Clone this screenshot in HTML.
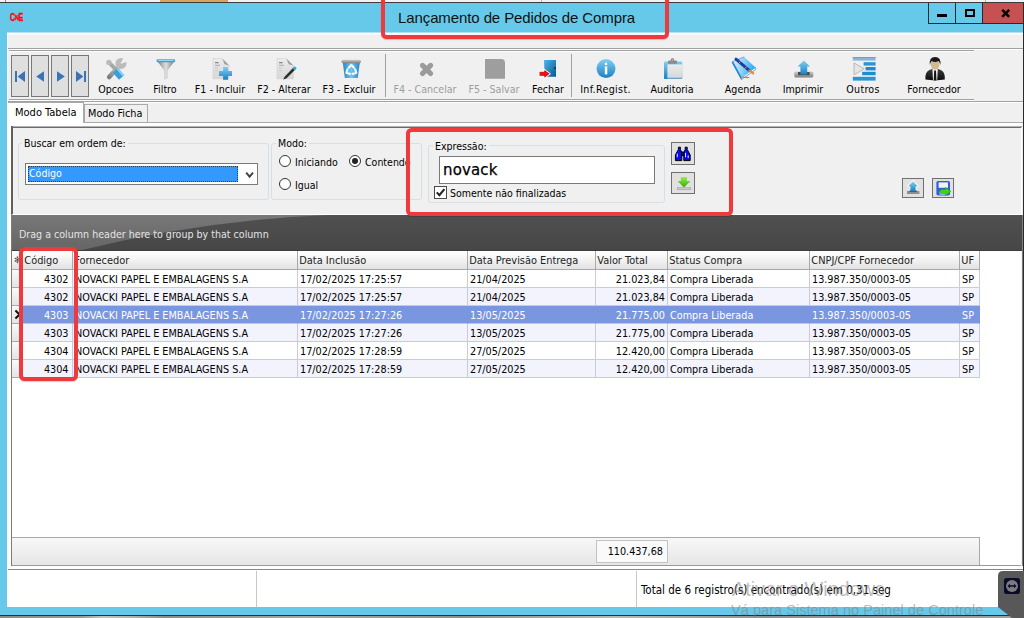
<!DOCTYPE html>
<html lang="pt-BR">
<head>
<meta charset="utf-8">
<title>Lançamento de Pedidos de Compra</title>
<style>
*{box-sizing:border-box;margin:0;padding:0}
html,body{width:1024px;height:618px;overflow:hidden;background:#66c9ea}
body{position:relative;font-family:"DejaVu Sans Condensed","Liberation Sans",sans-serif;font-size:10.5px;color:#000;line-height:13px}
.abs,.abs-c>*{position:absolute}
#topstrip{left:0;top:0;width:1024px;height:3px;background:#f2f2f2;border-bottom:1px solid #3c3c3c}
#title{left:398px;top:8px;font:15px "Liberation Sans",sans-serif;color:#111;white-space:nowrap;line-height:20px;letter-spacing:-0.1px}
#client{left:7px;top:32px;width:1016px;height:575px;background:#f0f0f0}
.cap{top:3px;height:21px;border:1px solid #1d2b33;border-top:none}
.tbl{position:absolute;top:82px;height:14px;line-height:14px;white-space:nowrap;text-align:center;transform:translateX(-50%);font-size:10.6px}
.dis{color:#9d9d9d}
.ico{position:absolute;top:57px;width:24px;height:24px;transform:translateX(-50%)}
.nav{position:absolute;top:55px;width:18px;height:42px;border:1px solid #787878;background:#dfdfdf}
.sep{position:absolute;top:54px;width:1px;height:43px;background:#a0a0a0}
.gb{position:absolute;border:1px solid #d5dfe5;border-radius:3px}
.gbl{position:absolute;background:#f0f0f0;white-space:nowrap;padding:0 2px}
.btn{position:absolute;border:1px solid #707070;background:#e1e1e1}
.radio{position:absolute;width:12px;height:12px;border:1px solid #333;border-radius:50%;background:#fff}
.hdr{position:absolute;top:0;height:19px;line-height:20px;font-size:10.9px;border-right:1px solid #a9a9a9;border-bottom:1px solid #a9a9a9;background:linear-gradient(#ffffff,#f4f4f4 45%,#e2e2e2);padding-left:1.3px;white-space:nowrap;overflow:hidden;color:#222}
.row{position:absolute;left:0;width:968px;height:18px}
.row span{position:absolute;top:0;height:18px;line-height:19px;font-size:10.75px;white-space:nowrap;overflow:hidden;border-right:1px solid #c4cbe3;border-bottom:1px solid #c4cbe3;padding:0 2px}
.row.a span{background:#fff}
.row.b span{background:#f2f3fc}
.row.s span{background:#7a96df;color:#fff;border-color:#7a96df;border-bottom-color:#b9c6ee}
.r{text-align:right}
.red{position:absolute;border:4px solid #ee3a3c;border-radius:5.5px;box-shadow:0 1px 1px rgba(0,0,0,.18)}
</style>
</head>
<body>
<div id="topstrip" class="abs"></div>
<div class="abs" style="left:160px;top:0;width:68px;height:2px;background:#d9a45f"></div>
<div class="abs" style="left:5px;top:0;width:1px;height:2px;background:#8a8a8a"></div>
<div class="abs" style="left:541px;top:0;width:1px;height:2px;background:#b5b5b5"></div>
<div class="abs" style="left:985px;top:0;width:1px;height:2px;background:#b5b5b5"></div>
<div id="client" class="abs"></div>
<div class="abs" style="left:7px;top:33px;width:1016px;height:1px;background:#fff"></div>
<div class="abs" style="left:7px;top:34px;width:1016px;height:1px;background:#f8f8f8"></div>
<!-- title bar -->
<div class="abs" style="left:10px;top:11.5px;font:bold 10px 'Liberation Sans',sans-serif;color:#fa0a0f;line-height:11px;letter-spacing:-0.4px;transform:scaleX(0.72);transform-origin:0 0;-webkit-text-stroke:0.5px #fa0a0f">C<span style="font-size:7.5px;position:relative;top:-1px">N</span>E</div>
<div id="title" class="abs">Lançamento de Pedidos de Compra</div>
<div class="abs cap" style="left:928px;width:28px"></div>
<div class="abs cap" style="left:955px;width:28px"></div>
<div class="abs cap" style="left:982px;width:42px;background:#c75050;border-right:none"></div>
<div class="abs" style="left:937px;top:14px;width:10px;height:3px;background:#000"></div>
<div class="abs" style="left:965px;top:9px;width:10px;height:8px;border:2px solid #000"></div>
<svg class="abs" style="left:1001px;top:9px" width="10" height="9" viewBox="0 0 10 9"><path d="M1.2 0.8 L8.2 7.8 M8.2 0.8 L1.2 7.8" stroke="#000" stroke-width="2.5"/></svg>
<div class="abs" style="left:1023px;top:3px;width:1px;height:570px;background:#2b2b2b"></div>

<!-- toolbar -->
<div class="abs" style="left:7px;top:48px;width:1016px;height:1px;background:#a0a0a0"></div>
<div class="abs" style="left:7px;top:49px;width:1016px;height:1px;background:#fff"></div>
<div class="abs" style="left:9px;top:50px;width:965px;height:1px;background:#a0a0a0"></div>
<div class="abs" style="left:9px;top:51px;width:965px;height:1px;background:#fff"></div>
<div class="abs" style="left:9px;top:99px;width:965px;height:1px;background:#a0a0a0"></div>
<div class="abs" style="left:9px;top:100px;width:965px;height:1px;background:#fff"></div>
<div class="abs" style="left:7px;top:101px;width:1016px;height:1px;background:#a0a0a0"></div>
<div class="abs" style="left:7px;top:102px;width:1016px;height:1px;background:#fff"></div>

<div class="nav" style="left:11px"></div>
<div class="nav" style="left:31px"></div>
<div class="nav" style="left:51px"></div>
<div class="nav" style="left:71px"></div>
<svg class="abs" style="left:10.5px;top:56px" width="80" height="42" viewBox="0 0 80 42">
 <g fill="#3874b6">
  <rect x="4" y="15" width="2" height="11"/><path d="M14 15 L14 26 L6.6 20.5 Z"/>
  <path d="M33 15.2 L33 25.8 L25.2 20.5 Z"/>
  <path d="M46 15.2 L46 25.8 L53.8 20.5 Z"/>
  <path d="M65 15 L65 26 L72.4 20.5 Z"/><rect x="73" y="15" width="2" height="11"/>
 </g>
</svg>

<div class="tbl" style="left:116px">Opcoes</div>
<div class="tbl" style="left:165px">Filtro</div>
<div class="tbl" style="left:220px">F1 - Incluir</div>
<div class="tbl" style="left:284px">F2 - Alterar</div>
<div class="tbl" style="left:349px">F3 - Excluir</div>
<div class="sep" style="left:385px"></div>
<div class="tbl dis" style="left:425px">F4 - Cancelar</div>
<div class="tbl dis" style="left:494px">F5 - Salvar</div>
<div class="tbl" style="left:548px">Fechar</div>
<div class="sep" style="left:571px"></div>
<div class="tbl" style="left:605.5px;letter-spacing:0.35px">Inf.Regist.</div>
<div class="tbl" style="left:672px">Auditoria</div>
<div class="tbl" style="left:743px">Agenda</div>
<div class="tbl" style="left:803px">Imprimir</div>
<div class="tbl" style="left:863px;letter-spacing:0.25px">Outros</div>
<div class="tbl" style="left:934px">Fornecedor</div>

<!-- ICONS -->
<svg class="abs" style="left:0;top:52px" width="1024" height="48" viewBox="0 52 1024 48">
<defs>
 <linearGradient id="gBlueV" x1="0" y1="0" x2="0" y2="1"><stop offset="0" stop-color="#7fd0f3"/><stop offset="1" stop-color="#1a80c2"/></linearGradient>
 <linearGradient id="gBlueD" x1="0" y1="0" x2="1" y2="1"><stop offset="0" stop-color="#48b8f0"/><stop offset="1" stop-color="#0a5688"/></linearGradient>
 <linearGradient id="gBlueH" x1="0" y1="0" x2="1" y2="0"><stop offset="0" stop-color="#2587c9"/><stop offset="0.5" stop-color="#72c8f0"/><stop offset="1" stop-color="#2587c9"/></linearGradient>
 <linearGradient id="gGrayH" x1="0" y1="0" x2="1" y2="0"><stop offset="0" stop-color="#808080"/><stop offset="0.5" stop-color="#dedede"/><stop offset="1" stop-color="#808080"/></linearGradient>
 <linearGradient id="gGrayV" x1="0" y1="0" x2="0" y2="1"><stop offset="0" stop-color="#cfcfcf"/><stop offset="1" stop-color="#7d7d7d"/></linearGradient>
 <linearGradient id="gDoc" x1="0" y1="0" x2="0" y2="1"><stop offset="0" stop-color="#ececec"/><stop offset="1" stop-color="#d6d6d6"/></linearGradient>
 <linearGradient id="gWr" x1="0" y1="1" x2="1" y2="0"><stop offset="0" stop-color="#7c7c7c"/><stop offset="0.6" stop-color="#b4b4b4"/><stop offset="1" stop-color="#d8d8d8"/></linearGradient>
</defs>

<!-- Opcoes: wrench + screwdriver -->
<g>
 <path d="M109.2 77 L119 66.4" stroke="url(#gWr)" stroke-width="4.6" stroke-linecap="round" fill="none"/>
 <circle cx="121" cy="63.4" r="5.5" fill="#bcbcbc"/>
 <path d="M120.4 64 L124.2 56.6 L128.6 61 Z" fill="#f0f0f0"/>
 <path d="M109.6 63.2 L115.5 69.2" stroke="#a6a6a6" stroke-width="3.8" stroke-linecap="round" fill="none"/>
 <circle cx="108.9" cy="62.4" r="2.7" fill="#bababa"/>
 <path d="M115.4 70.2 L121.6 77.6" stroke="#3a9fd9" stroke-width="7" fill="none"/>
 <path d="M117.4 68.6 L123.6 76" stroke="#86d2f3" stroke-width="2" fill="none"/>
</g>

<!-- Filtro: funnel -->
<g transform="translate(0,0.4)">
 <path d="M157.6 61.2 L174.2 61.2 L167.6 70 L167.6 78.2 L164.2 79 L164.2 70 Z" fill="url(#gGrayH)"/>
 <rect x="156.6" y="58.8" width="18.6" height="3" rx="1.2" fill="#3c9fd8"/>
 <rect x="158" y="59.4" width="15.8" height="1.2" rx="0.6" fill="#8fd6f5"/>
</g>

<!-- F1 Incluir: doc + plus -->
<g>
 <path d="M213 58.6 L222.5 58.6 L229 65 L229 78.8 L213 78.8 Z" fill="url(#gDoc)" stroke="#d2d2d2" stroke-width="0.6"/>
 <path d="M222.4 58.8 L229 65.4 L224.6 64.2 Z" fill="#9c9c9c"/>
 <rect x="215" y="62" width="3.6" height="1.3" fill="#8a8a8a"/>
 <rect x="215" y="64.8" width="5" height="1" fill="#a8a8a8"/>
 <rect x="215" y="67.6" width="3" height="0.8" fill="#c4c4c4"/>
 <rect x="215" y="70.4" width="3" height="0.8" fill="#c8c8c8"/>
 <path d="M223.1 67 H228 V71 H232 V75.9 H228 V79.8 H223.1 V75.9 H219 V71 H223.1 Z" fill="url(#gBlueV)"/>
</g>

<!-- F2 Alterar: doc + pen -->
<g>
 <path d="M277 58.6 L286.6 58.6 L293.4 65 L293.4 78.8 L277 78.8 Z" fill="url(#gDoc)" stroke="#d2d2d2" stroke-width="0.6"/>
 <path d="M286.4 58.8 L293.2 65.4 L288.8 64.2 Z" fill="#9c9c9c"/>
 <rect x="279" y="62" width="3.6" height="1.3" fill="#8a8a8a"/>
 <rect x="279" y="64.8" width="5" height="1" fill="#a8a8a8"/>
 <rect x="279" y="67.6" width="3" height="0.8" fill="#c4c4c4"/>
 <rect x="279" y="70.4" width="3" height="0.8" fill="#c8c8c8"/>
 <path d="M283.2 79.6 L284.6 76.8 L293.4 67.6 L295.4 69.4 L286.4 78.6 Z" fill="#2e2e2e"/>
 <circle cx="294.7" cy="68.2" r="1.7" fill="#35a6e2"/>
</g>

<!-- F3 Excluir: recycle bin -->
<g>
 <path d="M342.8 62.6 L359.8 62.6 L357.8 78 L344.8 78 Z" fill="url(#gBlueH)"/>
 <rect x="341.4" y="59.7" width="19.6" height="3.5" rx="1.6" fill="url(#gGrayV)"/>
 <g fill="none" stroke="#fff" stroke-width="2.2" stroke-linecap="round" stroke-linejoin="round" opacity="0.95">
  <path d="M348.9 67.6 L351.3 65 L353.8 67.6"/>
  <path d="M355.2 69.4 L356.2 72.8 L352.8 73.9"/>
  <path d="M349.8 73.9 L346.5 72.8 L347.4 69.4"/>
 </g>
</g>

<!-- F4 Cancelar -->
<g stroke="#9b9b9b" stroke-width="5.2" stroke-linecap="round">
 <path d="M422.5 65.4 L430.6 73.5"/><path d="M430.6 65.4 L422.5 73.5"/>
</g>

<!-- F5 Salvar -->
<path d="M485 59 H501.5 Q504.9 59.2 505 63 V78.8 H485 Z" fill="#9e9e9e"/>

<!-- Fechar: door + arrow -->
<g>
 <path d="M544 60 H556 V76.8 H544.6 Z" fill="url(#gBlueD)"/>
 <rect x="554.3" y="67.2" width="1.5" height="1.8" fill="#0a2a44"/>
 <path d="M539 71.2 H544 V69 L550.4 73.8 L544 78.6 V76.4 H539 Z" fill="#e3131b" stroke="#fff" stroke-width="1" stroke-linejoin="round"/>
</g>

<!-- Inf.Regist -->
<g>
 <circle cx="606" cy="68.6" r="9.5" fill="url(#gBlueV)"/>
 <circle cx="606" cy="63.9" r="1.35" fill="#fff"/>
 <rect x="604.8" y="66.4" width="2.5" height="8" fill="#fff"/>
</g>

<!-- Auditoria: clipboard -->
<g>
 <rect x="664" y="61.4" width="18.2" height="17.7" rx="1.2" fill="url(#gBlueV)"/>
 <rect x="667.4" y="64.4" width="14.8" height="13.8" fill="url(#gDoc)"/>
 <rect x="667.4" y="77.4" width="14.8" height="1" fill="#b9b9b9"/>
 <rect x="668" y="60.4" width="9" height="3.4" rx="0.8" fill="#8b8b8b"/>
 <circle cx="672.5" cy="59.8" r="1.7" fill="#8b8b8b"/>
 <circle cx="672.5" cy="59.8" r="0.6" fill="#e4e4e4"/>
</g>

<!-- Agenda: book + pen -->
<g>
 <defs><linearGradient id="gBook" x1="0" y1="0.4" x2="1" y2="0.6"><stop offset="0" stop-color="#d2eefc"/><stop offset="0.45" stop-color="#8fd2f6"/><stop offset="1" stop-color="#1ea6ee"/></linearGradient></defs>
 <path d="M741.2 79.8 L755.8 69.4 L755.4 67.4 L741 77.8 Z" fill="#fff" stroke="#2b80d2" stroke-width="0.7"/>
 <path d="M732 61.8 L744.2 56.9 L755.4 67.5 L741.4 78 Z" fill="url(#gBook)"/>
 <path d="M732.4 62 L741.3 78.4" stroke="#2383da" stroke-width="1.7"/>
 <path d="M732 61.8 L744.2 56.9" stroke="#3a9be6" stroke-width="0.8"/>
 <path d="M736 59.2 L749.2 70.4" stroke="#1c3fa6" stroke-width="3" stroke-linecap="round"/>
 <path d="M740.4 61.4 L738.8 63.4 M746.4 66.6 L744.8 68.6" stroke="#d9a040" stroke-width="1"/>
 <path d="M749.4 70.6 L753.2 73.4" stroke="#e58a3c" stroke-width="2.2" stroke-linecap="round"/>
 <path d="M742.4 77.2 L748.6 77.6" stroke="#e27a30" stroke-width="1.3" stroke-linecap="round"/>
</g>

<!-- Imprimir: tray + up arrow -->
<g>
 <rect x="794.3" y="71.4" width="19" height="6.2" rx="1.6" fill="url(#gGrayV)"/>
 <rect x="798" y="72" width="11.6" height="3.2" fill="#4a4a4a"/>
 <path d="M803.8 60.6 L810 66.6 H807.2 V74.6 H800.4 V66.6 H797.6 Z" fill="url(#gBlueV)"/>
</g>

<!-- Outros -->
<g>
 <rect x="852.8" y="57" width="22.8" height="3.6" fill="#8db4d8"/>
 <rect x="852.8" y="57" width="22.8" height="0.8" fill="#6b96c0"/>
 <rect x="863.6" y="62.2" width="12" height="3.4" fill="#2a95d4"/>
 <rect x="865.6" y="67" width="10" height="3.4" fill="#1b8dd0"/>
 <rect x="862.2" y="71.8" width="13.4" height="3.4" fill="#1b8dd0"/>
 <rect x="852.8" y="76.8" width="22.8" height="3.8" fill="#2a95d4"/>
 <path d="M854 63 L864.4 68.8 L854 74.8 Z" fill="#e4e6e4" stroke="#a9aca9" stroke-width="0.8"/>
</g>

<!-- Fornecedor: person -->
<g>
 <defs><linearGradient id="gSuit" x1="0" y1="0" x2="0" y2="1"><stop offset="0" stop-color="#3c3c3c"/><stop offset="1" stop-color="#0b0b0b"/></linearGradient></defs>
 <path d="M925.4 79.6 Q925 71.2 930 69.8 L933 68.8 H937.2 L940.2 69.8 Q945.2 71.2 944.8 79.6 Q935 81.2 925.4 79.6 Z" fill="url(#gSuit)"/>
 <path d="M932.4 69 H937.8 L937.2 80.5 H933 Z" fill="#f3f3f3"/>
 <path d="M934.2 70.6 H936 L936.5 80.5 H933.7 Z" fill="#141414"/>
 <ellipse cx="935.1" cy="64.6" rx="4.3" ry="5" fill="#d3ba92"/>
 <path d="M929.9 65 Q928.8 57 935.1 56.9 Q941.4 57 940.3 65 Q939.8 61.8 938.4 61 Q935.1 62.8 931.8 61 Q930.4 61.8 929.9 65 Z" fill="#191919"/>
</g>
</svg>

<!-- tabs -->
<div class="abs" style="left:84px;top:104px;width:64px;height:19px;border:1px solid #a9a9a9;background:#f0f0f0;line-height:18px;padding-left:3px;white-space:nowrap;font-size:10.8px">Modo Ficha</div>
<div class="abs" style="left:7px;top:102px;width:77px;height:22px;border:1px solid #a9a9a9;border-bottom:none;background:#fff;line-height:19px;padding-left:7px;white-space:nowrap;font-size:11px">Modo Tabela</div>
<div class="abs" style="left:84px;top:122px;width:939px;height:1px;background:#a9a9a9"></div>
<div class="abs" style="left:8px;top:123px;width:1014px;height:3px;background:#fff"></div>

<div class="abs" style="left:8px;top:123px;width:3px;height:446px;background:#fff"></div>
<!-- search panel -->
<div class="abs" style="left:11px;top:126px;width:1011px;height:89px;background:#f0f0f0;border-top:2px solid #6b6b6b;border-left:2px solid #5f5f5f;border-right:1px solid #fff;border-bottom:1px solid #fff"></div>
<div class="abs" style="left:13px;top:126px;width:1008px;height:1px;background:#b2b2b2"></div>

<div class="gb" style="left:18px;top:143px;width:251px;height:57px"></div>
<div class="gbl" style="left:22px;top:137px">Buscar em ordem de:</div>
<div class="abs" style="left:25px;top:163px;width:233px;height:22px;border:1px solid #7a7a7a;background:#fff"></div>
<div class="abs" style="left:28px;top:166px;width:210px;height:16px;background:#3399ff;outline:1px dotted #4a3a1a;outline-offset:-1px;color:#fff;line-height:15px;padding-left:1px">Código</div>
<svg class="abs" style="left:245px;top:171px" width="10" height="8" viewBox="0 0 10 8"><path d="M1.2 1.6 L4.6 5.6 L8 1.6" fill="none" stroke="#444" stroke-width="2"/></svg>

<div class="gb" style="left:271px;top:143px;width:151px;height:57px"></div>
<div class="gbl" style="left:276px;top:137px">Modo:</div>
<div class="radio" style="left:279px;top:155px"></div>
<div class="abs" style="left:295px;top:156px;white-space:nowrap">Iniciando</div>
<div class="radio" style="left:349px;top:155px"></div>
<div class="abs" style="left:352px;top:158px;width:6px;height:6px;border-radius:50%;background:#222"></div>
<div class="abs" style="left:365px;top:156px;white-space:nowrap">Contendo</div>
<div class="radio" style="left:279px;top:178px"></div>
<div class="abs" style="left:295px;top:179px;white-space:nowrap">Igual</div>

<div class="gb" style="left:428px;top:145px;width:237px;height:58px"></div>
<div class="gbl" style="left:433px;top:140px">Expressão:</div>
<div class="abs" style="left:439px;top:156px;width:216px;height:28px;border:1px solid #7a7a7a;background:#fff;font:16.6px 'DejaVu Sans Condensed','Liberation Sans',sans-serif;line-height:25px;padding-left:3px;letter-spacing:0.2px;-webkit-text-stroke:0.25px #000">novack</div>
<div class="abs" style="left:434px;top:186px;width:13px;height:13px;border:1px solid #4a4a4a;background:#fff"></div>
<svg class="abs" style="left:435px;top:187px" width="11" height="11" viewBox="0 0 11 11"><path d="M1.8 5.4 L4.4 8.2 L9.4 2.2" fill="none" stroke="#222" stroke-width="2.1"/></svg>
<div class="abs" style="left:450px;top:187px;white-space:nowrap">Somente não finalizadas</div>

<div class="btn" style="left:671px;top:142px;width:24px;height:23px"></div>
<div class="btn" style="left:671px;top:172px;width:24px;height:22px"></div>
<div class="btn" style="left:902px;top:178px;width:22px;height:20px"></div>
<div class="btn" style="left:932px;top:178px;width:22px;height:20px"></div>

<!-- panel button icons -->
<svg class="abs" style="left:660px;top:136px" width="50" height="64" viewBox="660 136 50 64">
 <defs><linearGradient id="gGreen" x1="0" y1="0" x2="0" y2="1"><stop offset="0" stop-color="#9af03a"/><stop offset="1" stop-color="#2fae12"/></linearGradient></defs>
 <!-- binoculars -->
 <g fill="#0a0af5" stroke="#000" stroke-width="1" stroke-linejoin="round">
  <path d="M678.4 147.2 H680.4 V149.4 L681.8 152.4 V160.6 H675.4 V155 L678.4 149.4 Z"/>
  <path d="M685.2 147.2 H687.2 V149.4 L690.2 155 V160.6 H683.8 V152.4 L685.2 149.4 Z"/>
  <rect x="681.8" y="152" width="2" height="3.6"/>
 </g>
 <path d="M677.3 153.6 V157.2 M685.5 152.8 V157.2 M688.2 155.4 V158" stroke="#fff" stroke-width="0.9" />
 <!-- green down arrow -->
 <path d="M680.8 177 H687 V181 H690.6 L683.9 187.4 L677.4 181 H680.8 Z" fill="url(#gGreen)"/>
 <rect x="677.2" y="187.6" width="13.6" height="2.2" fill="#c9c9c9" stroke="#9a9a9a" stroke-width="0.5"/>
</svg>
<svg class="abs" style="left:895px;top:170px" width="65" height="35" viewBox="895 170 65 35">
 <!-- up arrow on tray -->
 <path d="M913 180.6 L918.6 186.4 H916 V192 H910 V186.4 H907.4 Z" fill="#fff" stroke="#fff" stroke-width="1.4" stroke-linejoin="round" opacity="0.6"/>
 <rect x="907" y="191" width="12.4" height="3" fill="#8f8f8f"/>
 <rect x="909.6" y="190.4" width="7" height="1.6" fill="#4d4d4d"/>
 <path d="M913 181.4 L917.6 186.2 H915.6 V191.4 H910.4 V186.2 H908.4 Z" fill="url(#gBlueV)"/>
 <!-- floppy + green arrow -->
 <rect x="936.4" y="181" width="13.6" height="14.4" rx="1.6" fill="#2a62d8"/>
 <rect x="938.6" y="182.4" width="9.4" height="5.4" fill="#f2f2f2"/>
 <rect x="939.6" y="191.4" width="7" height="3.2" fill="#dfe6f5"/>
 <path d="M940.4 189.4 H945.4 V187.4 L951 191.4 L945.4 195.6 V193.6 H940.4 Z" fill="#3fd21a" stroke="#1f9a10" stroke-width="0.5"/>
</svg>


<!-- group panel -->
<svg class="abs" style="left:12px;top:215px" width="1010" height="36" viewBox="0 0 1010 36" preserveAspectRatio="none">
 <defs><linearGradient id="gl" x1="0" x2="0" y1="0" y2="1"><stop offset="0" stop-color="#787878"/><stop offset="1" stop-color="#656565"/></linearGradient>
 <linearGradient id="gd" x1="0" x2="0" y1="0" y2="1"><stop offset="0" stop-color="#505050"/><stop offset="1" stop-color="#464646"/></linearGradient></defs>
 <rect width="1010" height="36" fill="url(#gd)"/>
 <path d="M0 0 L316 0 Q 190 5 66 36 L0 36 Z" fill="url(#gl)"/><rect y="35" width="1010" height="1" fill="#3c3c3c"/>
</svg>
<div class="abs" style="left:19px;top:228px;font-size:10.6px;color:#e4e4e4;white-space:nowrap">Drag a column header here to group by that column</div>
<div class="abs" style="left:1022px;top:215px;width:1px;height:356px;background:#7d7d7d"></div>

<!-- grid -->
<div class="abs" style="left:12px;top:251px;width:1009px;height:315px;background:#fff;border-bottom:1px solid #9a9a9a"></div>
<div class="abs" style="left:11px;top:215px;width:1px;height:351px;background:#7b7b7b"></div>
<div class="abs abs-c" id="grid" style="left:12px;top:251px;width:968px;height:130px">
 <div class="hdr" style="left:0;width:11px;padding:0;font-size:9px;text-align:center;color:#444;text-indent:1px;line-height:18px">✻</div>
 <div class="hdr" style="left:11px;width:50px">Código</div>
 <div class="hdr" style="left:61px;width:225px">Fornecedor</div>
 <div class="hdr" style="left:286px;width:170px">Data Inclusão</div>
 <div class="hdr" style="left:456px;width:128px">Data Previsão Entrega</div>
 <div class="hdr" style="left:584px;width:72px">Valor Total</div>
 <div class="hdr" style="left:656px;width:142px">Status Compra</div>
 <div class="hdr" style="left:798px;width:150px">CNPJ/CPF Fornecedor</div>
 <div class="hdr" style="left:948px;width:20px">UF</div>
</div>
<div class="row a" style="left:12px;top:270px"><span style="left:0;width:11px;padding:0;background:linear-gradient(#fafafa,#e4e4e4);color:#222;border-color:#a9a9a9;font-weight:bold;text-align:center"></span><span class="r" style="left:11px;width:50px;padding-right:3.5px">4302</span><span style="left:61px;width:225px">NOVACKI PAPEL E EMBALAGENS S.A</span><span style="left:286px;width:170px">17/02/2025 17:25:57</span><span style="left:456px;width:128px">21/04/2025</span><span class="r" style="left:584px;width:72px">21.023,84</span><span style="left:656px;width:142px">Compra Liberada</span><span style="left:798px;width:150px">13.987.350/0003-05</span><span style="left:948px;width:20px">SP</span></div>
<div class="row b" style="left:12px;top:288px"><span style="left:0;width:11px;padding:0;background:linear-gradient(#fafafa,#e4e4e4);color:#222;border-color:#a9a9a9;font-weight:bold;text-align:center"></span><span class="r" style="left:11px;width:50px;padding-right:3.5px">4302</span><span style="left:61px;width:225px">NOVACKI PAPEL E EMBALAGENS S.A</span><span style="left:286px;width:170px">17/02/2025 17:25:57</span><span style="left:456px;width:128px">21/04/2025</span><span class="r" style="left:584px;width:72px">21.023,84</span><span style="left:656px;width:142px">Compra Liberada</span><span style="left:798px;width:150px">13.987.350/0003-05</span><span style="left:948px;width:20px">SP</span></div>
<div class="row s" style="left:12px;top:306px"><span style="left:0;width:11px;padding:0;background:linear-gradient(#fafafa,#e4e4e4);color:#222;border-color:#a9a9a9;font-weight:bold;text-align:center"><svg style="position:absolute;left:2px;top:3px" width="8" height="11" viewBox="0 0 8 11"><path d="M1.4 1.6 L5.6 5.5 L1.4 9.4" fill="none" stroke="#111" stroke-width="2.1"/></svg></span><span class="r" style="left:11px;width:50px;padding-right:3.5px">4303</span><span style="left:61px;width:225px">NOVACKI PAPEL E EMBALAGENS S.A</span><span style="left:286px;width:170px">17/02/2025 17:27:26</span><span style="left:456px;width:128px">13/05/2025</span><span class="r" style="left:584px;width:72px">21.775,00</span><span style="left:656px;width:142px">Compra Liberada</span><span style="left:798px;width:150px">13.987.350/0003-05</span><span style="left:948px;width:20px">SP</span></div>
<div class="row b" style="left:12px;top:324px"><span style="left:0;width:11px;padding:0;background:linear-gradient(#fafafa,#e4e4e4);color:#222;border-color:#a9a9a9;font-weight:bold;text-align:center"></span><span class="r" style="left:11px;width:50px;padding-right:3.5px">4303</span><span style="left:61px;width:225px">NOVACKI PAPEL E EMBALAGENS S.A</span><span style="left:286px;width:170px">17/02/2025 17:27:26</span><span style="left:456px;width:128px">13/05/2025</span><span class="r" style="left:584px;width:72px">21.775,00</span><span style="left:656px;width:142px">Compra Liberada</span><span style="left:798px;width:150px">13.987.350/0003-05</span><span style="left:948px;width:20px">SP</span></div>
<div class="row a" style="left:12px;top:342px"><span style="left:0;width:11px;padding:0;background:linear-gradient(#fafafa,#e4e4e4);color:#222;border-color:#a9a9a9;font-weight:bold;text-align:center"></span><span class="r" style="left:11px;width:50px;padding-right:3.5px">4304</span><span style="left:61px;width:225px">NOVACKI PAPEL E EMBALAGENS S.A</span><span style="left:286px;width:170px">17/02/2025 17:28:59</span><span style="left:456px;width:128px">27/05/2025</span><span class="r" style="left:584px;width:72px">12.420,00</span><span style="left:656px;width:142px">Compra Liberada</span><span style="left:798px;width:150px">13.987.350/0003-05</span><span style="left:948px;width:20px">SP</span></div>
<div class="row b" style="left:12px;top:360px"><span style="left:0;width:11px;padding:0;background:linear-gradient(#fafafa,#e4e4e4);color:#222;border-color:#a9a9a9;font-weight:bold;text-align:center"></span><span class="r" style="left:11px;width:50px;padding-right:3.5px">4304</span><span style="left:61px;width:225px">NOVACKI PAPEL E EMBALAGENS S.A</span><span style="left:286px;width:170px">17/02/2025 17:28:59</span><span style="left:456px;width:128px">27/05/2025</span><span class="r" style="left:584px;width:72px">12.420,00</span><span style="left:656px;width:142px">Compra Liberada</span><span style="left:798px;width:150px">13.987.350/0003-05</span><span style="left:948px;width:20px">SP</span></div>

<!-- footer -->
<div class="abs" style="left:12px;top:537px;width:968px;height:28px;border-top:1px solid #a9a9a9;border-right:1px solid #a9a9a9;background:linear-gradient(#f8f8f8,#e6e6e6)"></div>
<div class="abs r" style="left:596px;top:540px;width:72px;height:23px;border:1px solid #c3c3c3;background:#fafafa;line-height:22px;padding-right:4px;font-size:10.75px">110.437,68</div>

<!-- status bar -->
<div class="abs" style="left:7px;top:566px;width:1016px;height:3px;background:#fff"></div>
<div class="abs" style="left:7px;top:569px;width:1016px;height:1px;background:#85888f"></div>
<div class="abs" style="left:7px;top:570px;width:1016px;height:37px;background:#fff"></div>
<div class="abs" style="left:7px;top:32px;width:1px;height:538px;background:#fff"></div><div class="abs" style="left:7px;top:32px;width:1016px;height:1px;background:#b4e0f1"></div>
<div class="abs" style="left:256px;top:571px;width:1px;height:36px;background:#c8c8c8"></div>
<div class="abs" style="left:636px;top:571px;width:1px;height:36px;background:#c8c8c8"></div>
<div class="abs" style="left:641px;top:584px;font-size:11.5px;white-space:nowrap">Total de 6 registro(s) encontrado(s) em 0,31 seg</div>
<div class="abs" style="left:0;top:615px;width:1024px;height:3px;background:linear-gradient(90deg,#8a8a8a,#9a9a9a 8%,#c2c2c2 10%,#b0b0b0 13%,#8c8c8c 16%,#a6a6a6 30%,#8e8e8e 45%,#b8b8b8 60%,#909090 75%,#a0a0a0)"></div><div class="abs" style="left:0;top:615px;width:1024px;height:1px;background:#2c2c2c"></div>

<!-- watermark -->
<div class="abs" style="left:732px;top:576.5px;font:19.8px 'Liberation Sans',sans-serif;color:rgba(125,125,125,.52);white-space:nowrap;line-height:24px">Ativar o Windows</div>
<div class="abs" style="left:731px;top:600px;font:14.6px 'Liberation Sans',sans-serif;color:rgba(125,125,125,.52);white-space:nowrap;line-height:20px">Vá para Sistema no Painel de Controle</div>

<!-- teamviewer tab -->
<svg class="abs" style="left:998px;top:571px" width="26" height="47" viewBox="0 0 26 47"><path d="M26 0 L5 0 Q0 0 0 5 L0 36 L14 47 L26 47 Z" fill="#585858"/><rect x="6" y="7" width="16" height="16" rx="2.5" fill="#0a0a2a"/><circle cx="14" cy="15" r="6" fill="#7c7c80"/><path d="M9.5 15 L12 12.8 L12 14.3 L16 14.3 L16 12.8 L18.5 15 L16 17.2 L16 15.7 L12 15.7 L12 17.2 Z" fill="#0a0a2a"/></svg>

<!-- red annotations -->
<div class="red" style="left:381px;top:-10px;width:288px;height:49px"></div>
<div class="red" style="left:406px;top:128px;width:327px;height:88px"></div>
<div class="red" style="left:19px;top:247px;width:59px;height:134px"></div>
</body>
</html>
